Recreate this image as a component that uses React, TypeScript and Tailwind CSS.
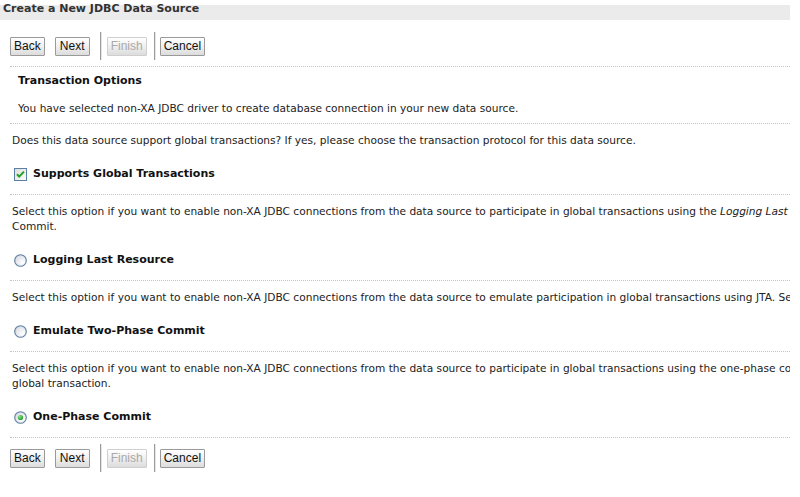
import React from "react";

const Btn = ({ label, disabled, w }: { label: string; disabled?: boolean; w?: string }) => (
  <button
    className={`h-[19px] px-[3px] border rounded-[1px] font-['Liberation_Sans',Arial,sans-serif] text-[12px] leading-none bg-[linear-gradient(to_bottom,#ffffff,#f1f1f1_45%,#dcdcdc)] ${
      w ?? ""
    } ${disabled ? "border-[#cfcfcf] text-[#a9a9a9]" : "border-[#9a9a9a] text-[#111]"}`}
  >
    {label}
  </button>
);

const Sep = () => <div className="w-[2px] h-[28px] bg-[#9b9b9b] border-r border-[#e6e6e6]" />;

const ButtonBar = () => (
  <div className="flex items-center h-[28px] pl-[10px]">
    <Btn label="Back" />
    <div className="w-[10px]" />
    <Btn label="Next" w="w-[35px]" />
    <div className="w-[10px]" />
    <Sep />
    <div className="w-[5px]" />
    <Btn label="Finish" disabled />
    <div className="w-[7px]" />
    <Sep />
    <div className="w-[4px]" />
    <Btn label="Cancel" />
  </div>
);

const Dots = () => <div className="ml-[10px] border-t border-dotted border-[#c4c4c4]" />;

const CheckBox = () => (
  <svg width="13" height="13" viewBox="0 0 13 13">
    <defs>
      <linearGradient id="cbg" x1="0" y1="0" x2="1" y2="1">
        <stop offset="0" stopColor="#dcdcd7" />
        <stop offset="1" stopColor="#ffffff" />
      </linearGradient>
    </defs>
    <rect x="0.5" y="0.5" width="12" height="12" fill="url(#cbg)" stroke="#5b7ea3" />
    <path d="M3 6.2 L5.2 8.6 L10 3.6" fill="none" stroke="#21a121" strokeWidth="2" />
  </svg>
);

const Radio = ({ on }: { on?: boolean }) => (
  <svg width="13" height="13" viewBox="0 0 13 13">
    <defs>
      <radialGradient id="rbg" cx="0.7" cy="0.7" r="0.8">
        <stop offset="0" stopColor="#ffffff" />
        <stop offset="1" stopColor="#d6dbe2" />
      </radialGradient>
      <radialGradient id="rdot" cx="0.35" cy="0.35" r="0.7">
        <stop offset="0" stopColor="#8ee18e" />
        <stop offset="1" stopColor="#1f9a1f" />
      </radialGradient>
    </defs>
    <circle cx="6.5" cy="6.5" r="5.8" fill="url(#rbg)" stroke="#5b7ea3" strokeWidth="1.1" />
    {on && <circle cx="6.5" cy="6.5" r="2.6" fill="url(#rdot)" />}
  </svg>
);

const Option = ({
  lines,
  label,
  on,
}: {
  lines: React.ReactNode[];
  label: string;
  on?: boolean;
}) => (
  <div>
    <Dots />
    <div className="pt-[9px] pl-[12px] leading-[15px] whitespace-nowrap">
      {lines.map((l, i) => (
        <div key={i}>{l}</div>
      ))}
    </div>
    <div className="mt-[19px] mb-[13px] h-[14px] pl-[14px] flex items-center gap-[6px]">
      <Radio on={on} />
      <span className="font-bold text-[11px] text-[#111]">{label}</span>
    </div>
  </div>
);

export default function App() {
  return (
    <div className="w-[800px] h-[497px] bg-white overflow-hidden font-['DejaVu_Sans',Tahoma,sans-serif] text-[10.6px] text-[#222]">
      <div className="w-[790px] overflow-hidden">
        <div className="h-[21px] pl-[3px] pt-[1px] bg-[linear-gradient(to_bottom,#ffffff_0,#ffffff_5px,#ebebeb_5px,#ebebeb_20px,#ffffff_20px)]">
          <span className="text-[11px] font-bold leading-[15px] text-[#333]">Create a New JDBC Data Source</span>
        </div>

        <div className="mt-[11px]">
          <ButtonBar />
        </div>

        <div className="mt-[6px]">
          <Dots />
        </div>
        <div className="pl-[18px] pt-[7px] leading-[14px]">
          <div className="font-bold text-[11px] text-[#111]">Transaction Options</div>
          <div className="mt-[13px]">
            You have selected non-XA JDBC driver to create database connection in your new data source.
          </div>
        </div>
        <div className="mt-[8px]">
          <Dots />
        </div>
        <div className="pl-[12px] pt-[9px] leading-[14px] whitespace-nowrap">
          Does this data source support global transactions? If yes, please choose the transaction protocol for this data source.
        </div>
        <div className="mt-[20px] mb-[13px] h-[14px] pl-[14px] flex items-center gap-[6px]">
          <CheckBox />
          <span className="font-bold text-[11px] text-[#111]">Supports Global Transactions</span>
        </div>

        <Option
          label="Logging Last Resource"
          lines={[
            <>
              Select this option if you want to enable non-XA JDBC connections from the data source to participate in global
              transactions using the <i>Logging Last Resource</i>
            </>,
            "Commit.",
          ]}
        />
        <Option
          label="Emulate Two-Phase Commit"
          lines={[
            "Select this option if you want to enable non-XA JDBC connections from the data source to emulate participation in global transactions using JTA. Select this option only if your application can tolerate heuristic conditions.",
          ]}
        />
        <Option
          label="One-Phase Commit"
          on
          lines={[
            "Select this option if you want to enable non-XA JDBC connections from the data source to participate in global transactions using the one-phase commit transaction processing. With this option, no other resources can participate in the",
            "global transaction.",
          ]}
        />

        <Dots />
        <div className="mt-[6px]">
          <ButtonBar />
        </div>
      </div>
    </div>
  );
}
